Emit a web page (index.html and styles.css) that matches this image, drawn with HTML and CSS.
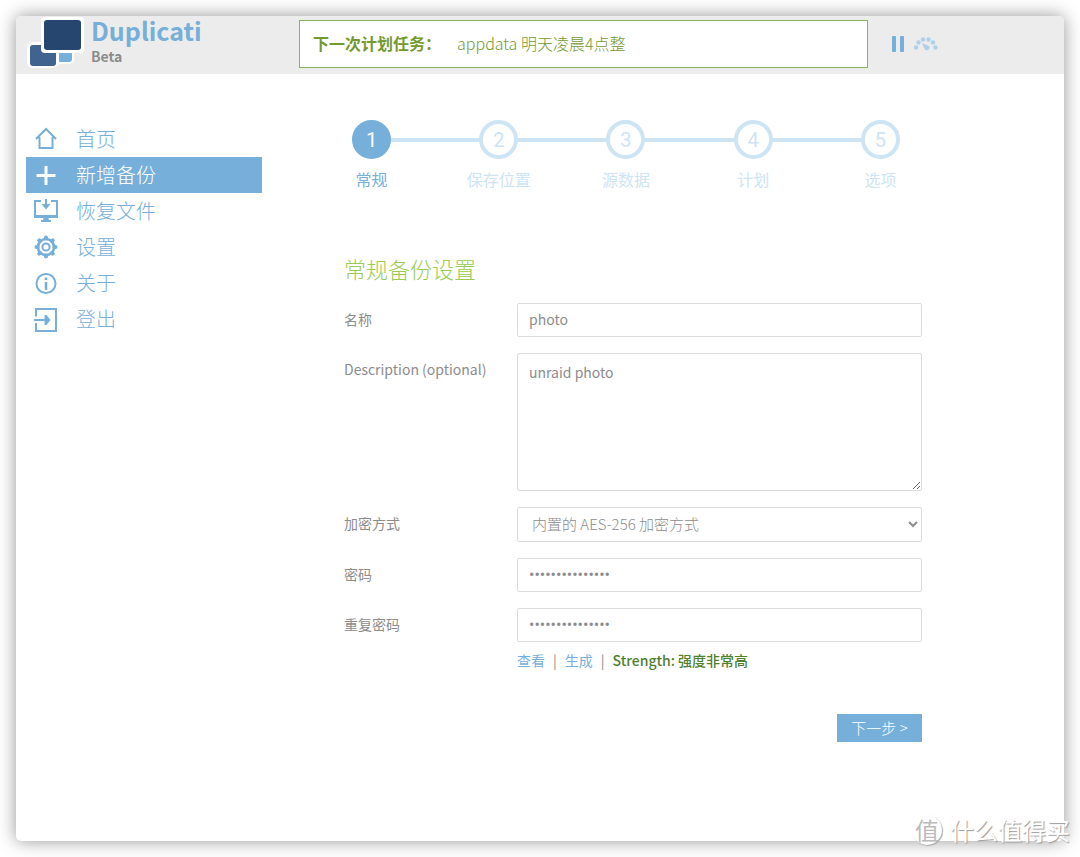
FILE: index.html
```html
<!DOCTYPE html>
<html lang="zh-CN">
<head>
<meta charset="utf-8">
<meta name="viewport" content="width=device-width, initial-scale=1">
<title>Duplicati</title>
<link rel="stylesheet" href="styles.css">
</head>
<body>
<div class="window">
  <header class="header">
    <div class="brand">
      <svg class="logo" width="58" height="54" viewBox="0 0 58 54" aria-hidden="true">
        <g stroke="#fff" stroke-width="6" stroke-linejoin="round">
          <rect x="31" y="32" width="14" height="12" rx="2" fill="#76afd9"/>
          <rect x="4" y="28" width="26" height="20" rx="3" fill="#40648f"/>
          <rect x="18" y="3" width="37" height="30" rx="3" fill="#26466f"/>
        </g>
        <rect x="31" y="30" width="15" height="15" rx="3" fill="#76afd9"/>
        <rect x="27" y="25" width="6" height="23" fill="#fff"/>
        <rect x="4" y="28" width="26" height="21" rx="3" fill="#40648f"/>
        <rect x="15" y="0" width="43" height="36" rx="4" fill="#fff"/>
        <rect x="18" y="3" width="37" height="30" rx="3" fill="#26466f"/>
      </svg>
      <div class="brand-text">
        <div class="brand-name">Duplicati</div>
        <div class="brand-sub">Beta</div>
      </div>
    </div>
    <div class="next-task"><strong>下一次计划任务：</strong><span>appdata 明天凌晨4点整</span></div>
    <div class="controls">
      <button type="button" class="icon-button" aria-label="暂停">
        <svg width="12" height="16" viewBox="0 0 12 16" fill="#76afd9"><rect x="0" y="0" width="4" height="16" rx="1"/><rect x="8" y="0" width="4" height="16" rx="1"/></svg>
      </button>
      <button type="button" class="icon-button" aria-label="限速">
        <svg width="24" height="16" viewBox="0 0 24 16" fill="#afd0e9"><circle cx="2" cy="11.500" r="2.200"/><circle cx="4.500" cy="6.500" r="2.200"/><circle cx="9" cy="3.500" r="2.200"/><circle cx="14.500" cy="3.500" r="2.200"/><circle cx="19" cy="6.500" r="2.200"/><circle cx="21.500" cy="11.500" r="2.200"/><path d="M8 7l7 3a2.700 2.700 0 1 1-4.500 3z"/></svg>
      </button>
    </div>
  </header>
  <div class="body">
    <nav class="menu">
      <a href="#"><svg class="icon" viewBox="0 0 26 26"><path d="M3 13L13 3l10 10M6.500 11v11h13V11"/></svg>首页</a>
      <a href="#" class="active"><svg class="icon plus" viewBox="0 0 26 26"><path d="M13 4v19M3.500 13.500h19"/></svg>新增备份</a>
      <a href="#"><svg class="icon" viewBox="0 0 26 26"><path d="M8 3H2v16h22V3h-6M13 1v8"/><path class="solid" d="M8.500 6h9L13 11.500zM1 17h24v3H1zM11 19h4l1 3h2v2H8v-2h2z"/></svg>恢复文件</a>
      <a href="#"><svg class="icon" viewBox="0 0 26 26"><circle cx="13" cy="13" r="8" stroke-width="2.600"/><circle cx="13" cy="13" r="3.600"/><path stroke-width="4" stroke-linecap="round" d="M13 3.500v1M13 21.500v1M3.500 13h1M21.500 13h1M6.300 6.300l.7.700M19 19l.7.700M6.300 19.700l.7-.7M19 7l.7-.7"/></svg>设置</a>
      <a href="#"><svg class="icon" viewBox="0 0 26 26"><circle cx="13" cy="13.500" r="9.500"/><path stroke-width="2.600" d="M13 12v8M13 7.500v2.600"/></svg>关于</a>
      <a href="#"><svg class="icon" viewBox="0 0 26 26"><path d="M3 10.500V3h20v22H3v-8M1 14h13"/><path class="solid" d="M11.500 9h2l4 5-4 5h-2z"/></svg>登出</a>
    </nav>
    <main class="content">
      <ol class="steps">
        <li class="current"><span class="num">1</span>常规</li>
        <li><span class="num">2</span>保存位置</li>
        <li><span class="num">3</span>源数据</li>
        <li><span class="num">4</span>计划</li>
        <li><span class="num">5</span>选项</li>
      </ol>
      <form class="form">
        <h2>常规备份设置</h2>
        <div class="row"><label for="name">名称</label><input id="name" type="text" value="photo"></div>
        <div class="row"><label for="desc">Description (optional)</label><textarea id="desc">unraid photo</textarea></div>
        <div class="row"><label for="enc">加密方式</label><select id="enc"><option>内置的 AES-256 加密方式</option></select></div>
        <div class="row"><label for="pass">密码</label><input id="pass" type="password" value="abcdefghijklmno"></div>
        <div class="row"><label for="repeat">重复密码</label><input id="repeat" type="password" value="abcdefghijklmno"></div>
        <div class="tools"><a href="#">查看</a><span>|</span><a href="#">生成</a><span>|</span><strong>Strength: 强度非常高</strong></div>
        <button type="button" class="next">下一步 &gt;</button>
      </form>
    </main>
  </div>
</div>
<div class="watermark"><span class="seal">值</span><span>什么值得买</span></div>
</body>
</html>
```
FILE: styles.css
```css
* { box-sizing: border-box; }
body {
  margin: 0;
  min-height: 100vh;
  padding: 16px;
  display: flex;
  background: #fff;
  color: #8c8c8c;
  font: 14px/20px "Noto Sans CJK SC", sans-serif;
  position: relative;
}
a { color: #76afd9; text-decoration: none; }
.window {
  flex: 1;
  min-width: 0;
  background: #fff;
  border-radius: 5px;
  box-shadow: 0 0 18px rgba(0, 0, 0, .42);
}
.header {
  display: grid;
  grid-template-columns: 283px minmax(0, 569px) 1fr;
  align-items: start;
  height: 58px;
  background: #ececec;
  border-radius: 5px 5px 0 0;
}
.brand { display: flex; gap: 7px; padding-left: 10px; }
.logo { margin-top: 1px; }
.brand-text { font-weight: 700; }
.brand-name { color: #76afd9; font-size: 25px; line-height: 28px; }
.brand-sub { font-size: 14px; line-height: 24px; }
.next-task {
  display: flex;
  align-items: center;
  gap: 16px;
  height: 48px;
  margin-top: 4px;
  padding: 0 13px 2px;
  background: #fff;
  border: 1px solid #8db35a;
  color: #74992f;
  font-size: 16px;
  font-weight: 300;
  line-height: 24px;
}
.next-task strong { font-weight: 700; }
.controls { display: flex; align-items: center; gap: 10px; height: 48px; margin-top: 4px; padding-left: 24px; }
.icon-button { padding: 0; border: 0; background: none; display: flex; }
.body { display: flex; padding-top: 46px; }
.menu { flex: 0 0 236px; margin: 1px 46px 0 10px; }
.menu a {
  display: flex;
  align-items: center;
  gap: 17px;
  height: 36px;
  padding-left: 7px;
  font-size: 20px;
  font-weight: 300;
}
.menu .active { background: #76afd9; color: #fff; }
.icon { width: 26px; height: 26px; fill: none; stroke: currentColor; stroke-width: 2; }
.icon.plus { stroke-width: 3; }
.icon .solid { fill: currentColor; stroke: none; }
.content { flex: 0 1 636px; min-width: 0; }
.steps {
  display: grid;
  grid-template-columns: repeat(5, 1fr);
  margin: 0;
  padding: 0;
  list-style: none;
  color: #cde4f4;
  text-align: center;
  font-size: 16px;
}
.steps li {
  background: linear-gradient(currentColor, currentColor) 0 18px / 100% 4px no-repeat;
}
.steps li:first-child { background: linear-gradient(#cde4f4, #cde4f4) 100% 18px / 50% 4px no-repeat; }
.steps li:last-child { background-size: 50% 4px; }
.steps .current { color: #76afd9; }
.num {
  display: block;
  width: 39px;
  height: 39px;
  margin: 0 auto 10px;
  border: 4px solid;
  border-radius: 50%;
  background: #fff;
  font-family: Roboto, sans-serif;
  font-size: 20px;
  line-height: 32px;
}
.current .num { background: #76afd9; border-color: #76afd9; color: #fff; }
.form { display: flex; flex-direction: column; padding: 63px 22px 0 36px; }
h2 { margin: 0 0 19px; color: #9acb51; font-size: 22px; line-height: 32px; font-weight: 300; }
.row { display: grid; grid-template-columns: 173px 1fr; margin-bottom: 16px; }
.row label { padding-top: 6px; }
input, textarea, select {
  width: 100%;
  height: 34px;
  margin: 0;
  padding: 0 11px 2px;
  border: 1px solid #dcdcdc;
  border-radius: 2px;
  background: #fff;
  color: #8c8c8c;
  font: 14px/20px "Noto Sans CJK SC", sans-serif;
}
input[type="password"] { font-family: Roboto, sans-serif; font-size: 16px; }
textarea { display: block; height: 138px; padding-top: 8px; }
select { height: 35px; padding-left: 10px; font-size: 15px; font-weight: 300; }
.tools { display: flex; gap: 8px; margin: -8px 0 0 173px; }
.tools strong { color: #50812f; font-weight: 500; }
.next {
  align-self: flex-end;
  width: 85px;
  height: 28px;
  margin-top: 44px;
  padding: 0;
  border: 0;
  background: #76afd9;
  color: #fff;
  font: 300 15px/20px "Noto Sans CJK SC", sans-serif;
}
.watermark {
  position: absolute;
  right: 10px;
  bottom: 10px;
  display: flex;
  align-items: center;
  gap: 8px;
  color: #fff;
  font-size: 24px;
  line-height: 34px;
  text-shadow: 1px 1px 1px #999;
}
.seal {
  width: 30px;
  height: 30px;
  border-radius: 50%;
  background: #fff;
  box-shadow: 1px 1px 1px #aaa;
  color: #bbb;
  line-height: 30px;
  text-align: center;
  text-shadow: none;
}
```
